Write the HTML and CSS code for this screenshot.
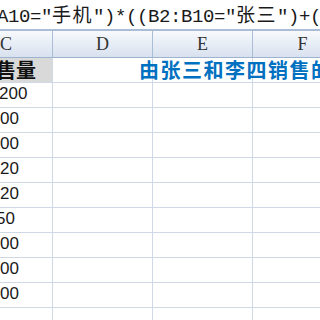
FILE: index.html
```html
<!DOCTYPE html>
<html lang="zh-CN">
<head>
    <meta charset="UTF-8">
    <title>销售统计</title>
    <link rel="stylesheet" href="styles.css">
</head>
<body>
    <div class="formula">
        <span class="fx">A10="<span class="cjk">手机</span>")*((B2:B10="<span class="cjk">张三</span>")+(B2:B10="<span class="cjk">李四</span>"))</span>
    </div>

    <div class="sheet">
        <div class="head">C</div>
        <div class="head">D</div>
        <div class="head">E</div>
        <div class="head">F</div>

        <div class="cell title"><span class="shift">售量</span></div>
        <div class="cell"><span class="note">由张三和李四销售的手机数量</span></div>
        <div class="cell"></div>
        <div class="cell"></div>

        <div class="cell num"><span class="shift-s">200</span></div><div class="cell"></div><div class="cell"></div><div class="cell"></div>
        <div class="cell num">00</div><div class="cell"></div><div class="cell"></div><div class="cell"></div>
        <div class="cell num">00</div><div class="cell"></div><div class="cell"></div><div class="cell"></div>
        <div class="cell num">20</div><div class="cell"></div><div class="cell"></div><div class="cell"></div>
        <div class="cell num">20</div><div class="cell"></div><div class="cell"></div><div class="cell"></div>
        <div class="cell num"><span class="shift-l">50</span></div><div class="cell"></div><div class="cell"></div><div class="cell"></div>
        <div class="cell num">00</div><div class="cell"></div><div class="cell"></div><div class="cell"></div>
        <div class="cell num">00</div><div class="cell"></div><div class="cell"></div><div class="cell"></div>
        <div class="cell num">00</div><div class="cell"></div><div class="cell"></div><div class="cell"></div>
        <div class="cell num"></div><div class="cell"></div><div class="cell"></div><div class="cell"></div>
    </div>
</body>
</html>
```

FILE: styles.css
```css
body {
    margin: 0;
    width: 320px;
    height: 320px;
    overflow: hidden;
    background: #ffffff;
}

.formula {
    height: 29px;
    border-bottom: 2px solid #a9bdd6;
    white-space: nowrap;
    overflow: hidden;
    background: #ffffff;
}

.fx {
    display: block;
    margin-left: -3px;
    padding-top: 1px;
    font-family: "Liberation Mono", "DejaVu Sans Mono", monospace;
    font-size: 19px;
    line-height: 26px;
    letter-spacing: -0.4px;
    color: #1a1a1a;
}

.cjk {
    font-family: "Noto Sans CJK SC", sans-serif;
    font-size: 19px;
    letter-spacing: 1.5px;
}

.sheet {
    display: grid;
    grid-template-columns: 53px 100px 100px 100px;
    grid-template-rows: 27px;
    grid-auto-rows: 25px;
}

.head {
    display: flex;
    align-items: center;
    justify-content: center;
    background: linear-gradient(#f7f9fc, #e4ebf5 60%, #d8e1ee);
    border-right: 1px solid #a9bdd6;
    border-bottom: 1px solid #9eb3cf;
    font-family: "Liberation Serif", serif;
    font-size: 18px;
    color: #333333;
}

.head:first-child {
    justify-content: flex-start;
    padding-left: 0;
}

.cell {
    display: flex;
    align-items: flex-end;
    border-right: 1px solid #d0d7e5;
    border-bottom: 1px solid #d0d7e5;
    white-space: nowrap;
    min-width: 0;
}

.title {
    background: #d9d9d9;
    font-family: "Noto Sans CJK SC", sans-serif;
    font-weight: bold;
    font-size: 20px;
    line-height: 24px;
    color: #111111;
    overflow: hidden;
}

.shift {
    margin-left: -4px;
}

.note {
    position: relative;
    z-index: 1;
    margin-left: 86px;
    font-family: "Noto Sans CJK SC", sans-serif;
    font-weight: bold;
    font-size: 20px;
    line-height: 24px;
    letter-spacing: 1.5px;
    color: #0070c0;
}

.num {
    font-family: "Liberation Sans", Arial, sans-serif;
    font-size: 17px;
    color: #1a1a1a;
    padding-bottom: 3px;
    overflow: hidden;
}

.shift-s {
    margin-left: -1px;
}

.shift-l {
    margin-left: -4px;
}
```
